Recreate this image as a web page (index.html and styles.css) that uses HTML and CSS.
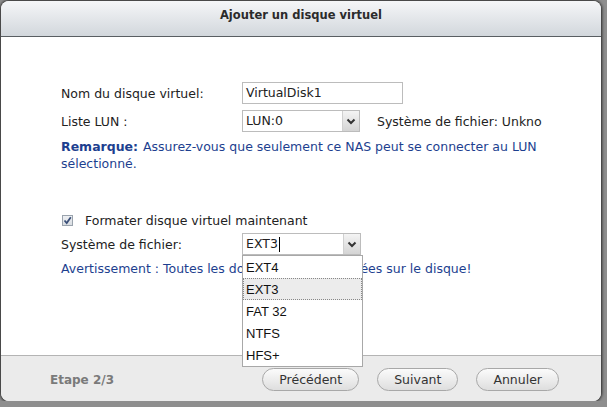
FILE: index.html
```html
<!DOCTYPE html>
<html lang="fr">
<head>
    <meta charset="UTF-8">
    <title>Ajouter un disque virtuel</title>
    <link rel="stylesheet" href="styles.css">
</head>
<body>
    <div class="dialog">
        <div class="dialog-header">Ajouter un disque virtuel</div>
        <div class="dialog-body">
            <div class="form-row">
                <span class="label">Nom du disque virtuel:</span>
                <div class="text-input">VirtualDisk1</div>
            </div>
            <div class="form-row">
                <span class="label">Liste LUN :</span>
                <div class="select lun-select">
                    <span class="select-value">LUN:0</span>
                    <span class="select-arrow">
                        <svg width="16" height="20" viewBox="0 0 16 20"><path d="M4.5 8.5 L8 12 L11.5 8.5" fill="none" stroke="#333" stroke-width="2"/></svg>
                    </span>
                </div>
                <span class="fs-info">Système de fichier: Unkno</span>
            </div>
            <p class="note"><b>Remarque:</b> Assurez-vous que seulement ce NAS peut se connecter au LUN sélectionné.</p>

            <div class="check-row">
                <span class="checkbox">
                    <svg width="9" height="9" viewBox="0 0 9 9"><path d="M1.5 4.5 L3.7 7 L7.8 1.2" fill="none" stroke="#3a4f78" stroke-width="1.8"/></svg>
                </span>
                <span>Formater disque virtuel maintenant</span>
            </div>
            <div class="form-row fs-row">
                <span class="label">Système de fichier:</span>
                <div class="select fs-select">
                    <span class="select-value">EXT3<span class="caret"></span></span>
                    <span class="select-arrow">
                        <svg width="16" height="20" viewBox="0 0 16 20"><path d="M4.5 8.5 L8 12 L11.5 8.5" fill="none" stroke="#333" stroke-width="2"/></svg>
                    </span>
                    <ul class="dropdown">
                        <li>EXT4</li>
                        <li class="active">EXT3</li>
                        <li>FAT 32</li>
                        <li>NTFS</li>
                        <li>HFS+</li>
                    </ul>
                </div>
            </div>
            <p class="warning">Avertissement : Toutes les données seront effacées sur le disque!</p>
        </div>
        <div class="dialog-footer">
            <span class="step">Etape 2/3</span>
            <div class="buttons">
                <button class="btn">Précédent</button>
                <button class="btn">Suivant</button>
                <button class="btn">Annuler</button>
            </div>
        </div>
    </div>
</body>
</html>
```

FILE: styles.css
```css
body {
    margin: 0;
    padding: 0;
    background: #8e8e8e;
    font-family: "DejaVu Sans", Verdana, sans-serif;
    font-size: 12.5px;
    color: #222;
}
.dialog {
    margin: 1px 0 0 1px;
    width: 600px;
    height: 400px;
    background: white;
    border-radius: 8px;
    box-shadow: 0 0 3px 1px rgba(0, 0, 0, 0.75);
    display: flex;
    flex-direction: column;
    overflow: hidden;
}
.dialog-header {
    height: 36px;
    padding-top: 7px;
    box-sizing: border-box;
    line-height: 15px;
    text-align: center;
    font-weight: bold;
    font-size: 11.5px;
    color: #2b2b2b;
    background: linear-gradient(#f5f6f8, #d2d7dc);
    border-bottom: 1px solid #595e62;
    flex-shrink: 0;
}
.dialog-body {
    height: 318px;
    padding: 45px 0 0 60px;
    box-sizing: border-box;
    flex-shrink: 0;
}
.form-row {
    display: flex;
    align-items: center;
    height: 22px;
    margin-bottom: 6px;
}
.label {
    width: 181px;
    flex-shrink: 0;
}
.text-input {
    width: 161px;
    height: 22px;
    box-sizing: border-box;
    border: 1px solid #bcbcbc;
    padding: 0 3px;
    line-height: 20px;
}
.select {
    position: relative;
    height: 22px;
    box-sizing: border-box;
    border: 1px solid #bcbcbc;
    display: flex;
    background: white;
}
.lun-select {
    width: 118px;
}
.fs-select {
    width: 119px;
}
.select-value {
    flex: 1;
    padding: 0 3px;
    line-height: 20px;
    display: flex;
    align-items: center;
}
.caret {
    display: inline-block;
    width: 1px;
    height: 15px;
    background: #000;
    margin-left: 1px;
}
.select-arrow {
    width: 16px;
    border-left: 1px solid #d0d0d0;
    background: linear-gradient(#f4f4f4, #d4d4d4);
    display: flex;
    align-items: center;
    justify-content: center;
}
.fs-info {
    margin-left: 17px;
}
.note, .warning {
    margin: 4px 0 0;
    width: 490px;
    line-height: 17px;
    color: #1d3f8f;
}
.note b {
    margin-right: 1px;
}
.check-row {
    display: flex;
    align-items: center;
    height: 17px;
    margin-top: 40px;
}
.checkbox {
    width: 11px;
    height: 11px;
    box-sizing: border-box;
    border: 1px solid #9aa3ad;
    background: linear-gradient(#eef0f3, #d9dde2);
    margin: 0 12px 0 1px;
    display: flex;
    align-items: center;
    justify-content: center;
}
.fs-row {
    margin: 4px 0 0;
}
.dropdown {
    position: absolute;
    top: 21px;
    left: -1px;
    width: 119px;
    margin: 0;
    padding: 0;
    list-style: none;
    background: white;
    border: 1px solid #a8a8a8;
    font-family: "Liberation Sans", Arial, sans-serif;
    font-size: 13px;
    color: #111;
    z-index: 2;
}
.dropdown li {
    height: 22px;
    line-height: 22px;
    padding-left: 2px;
    box-sizing: border-box;
    border: 1px solid transparent;
}
.dropdown li.active {
    background: #ececec;
    border: 1px dotted #888;
}
.warning {
    margin-top: 5px;
}
.dialog-footer {
    flex: 1;
    background: #ebebeb;
    border-top: 1px solid #b4b4b4;
    display: flex;
    align-items: center;
    justify-content: space-between;
    padding: 2px 42px 0 49px;
}
.step {
    font-weight: bold;
    font-size: 12px;
    color: #7a7a7a;
}
.buttons {
    display: flex;
    gap: 18px;
}
.btn {
    height: 23px;
    padding: 0 16px;
    font-family: "DejaVu Sans", Verdana, sans-serif;
    font-size: 12.5px;
    color: #333;
    background: linear-gradient(#fbfbfb, #dedede);
    border: 1px solid #a8a8a8;
    border-radius: 12px;
}
```
